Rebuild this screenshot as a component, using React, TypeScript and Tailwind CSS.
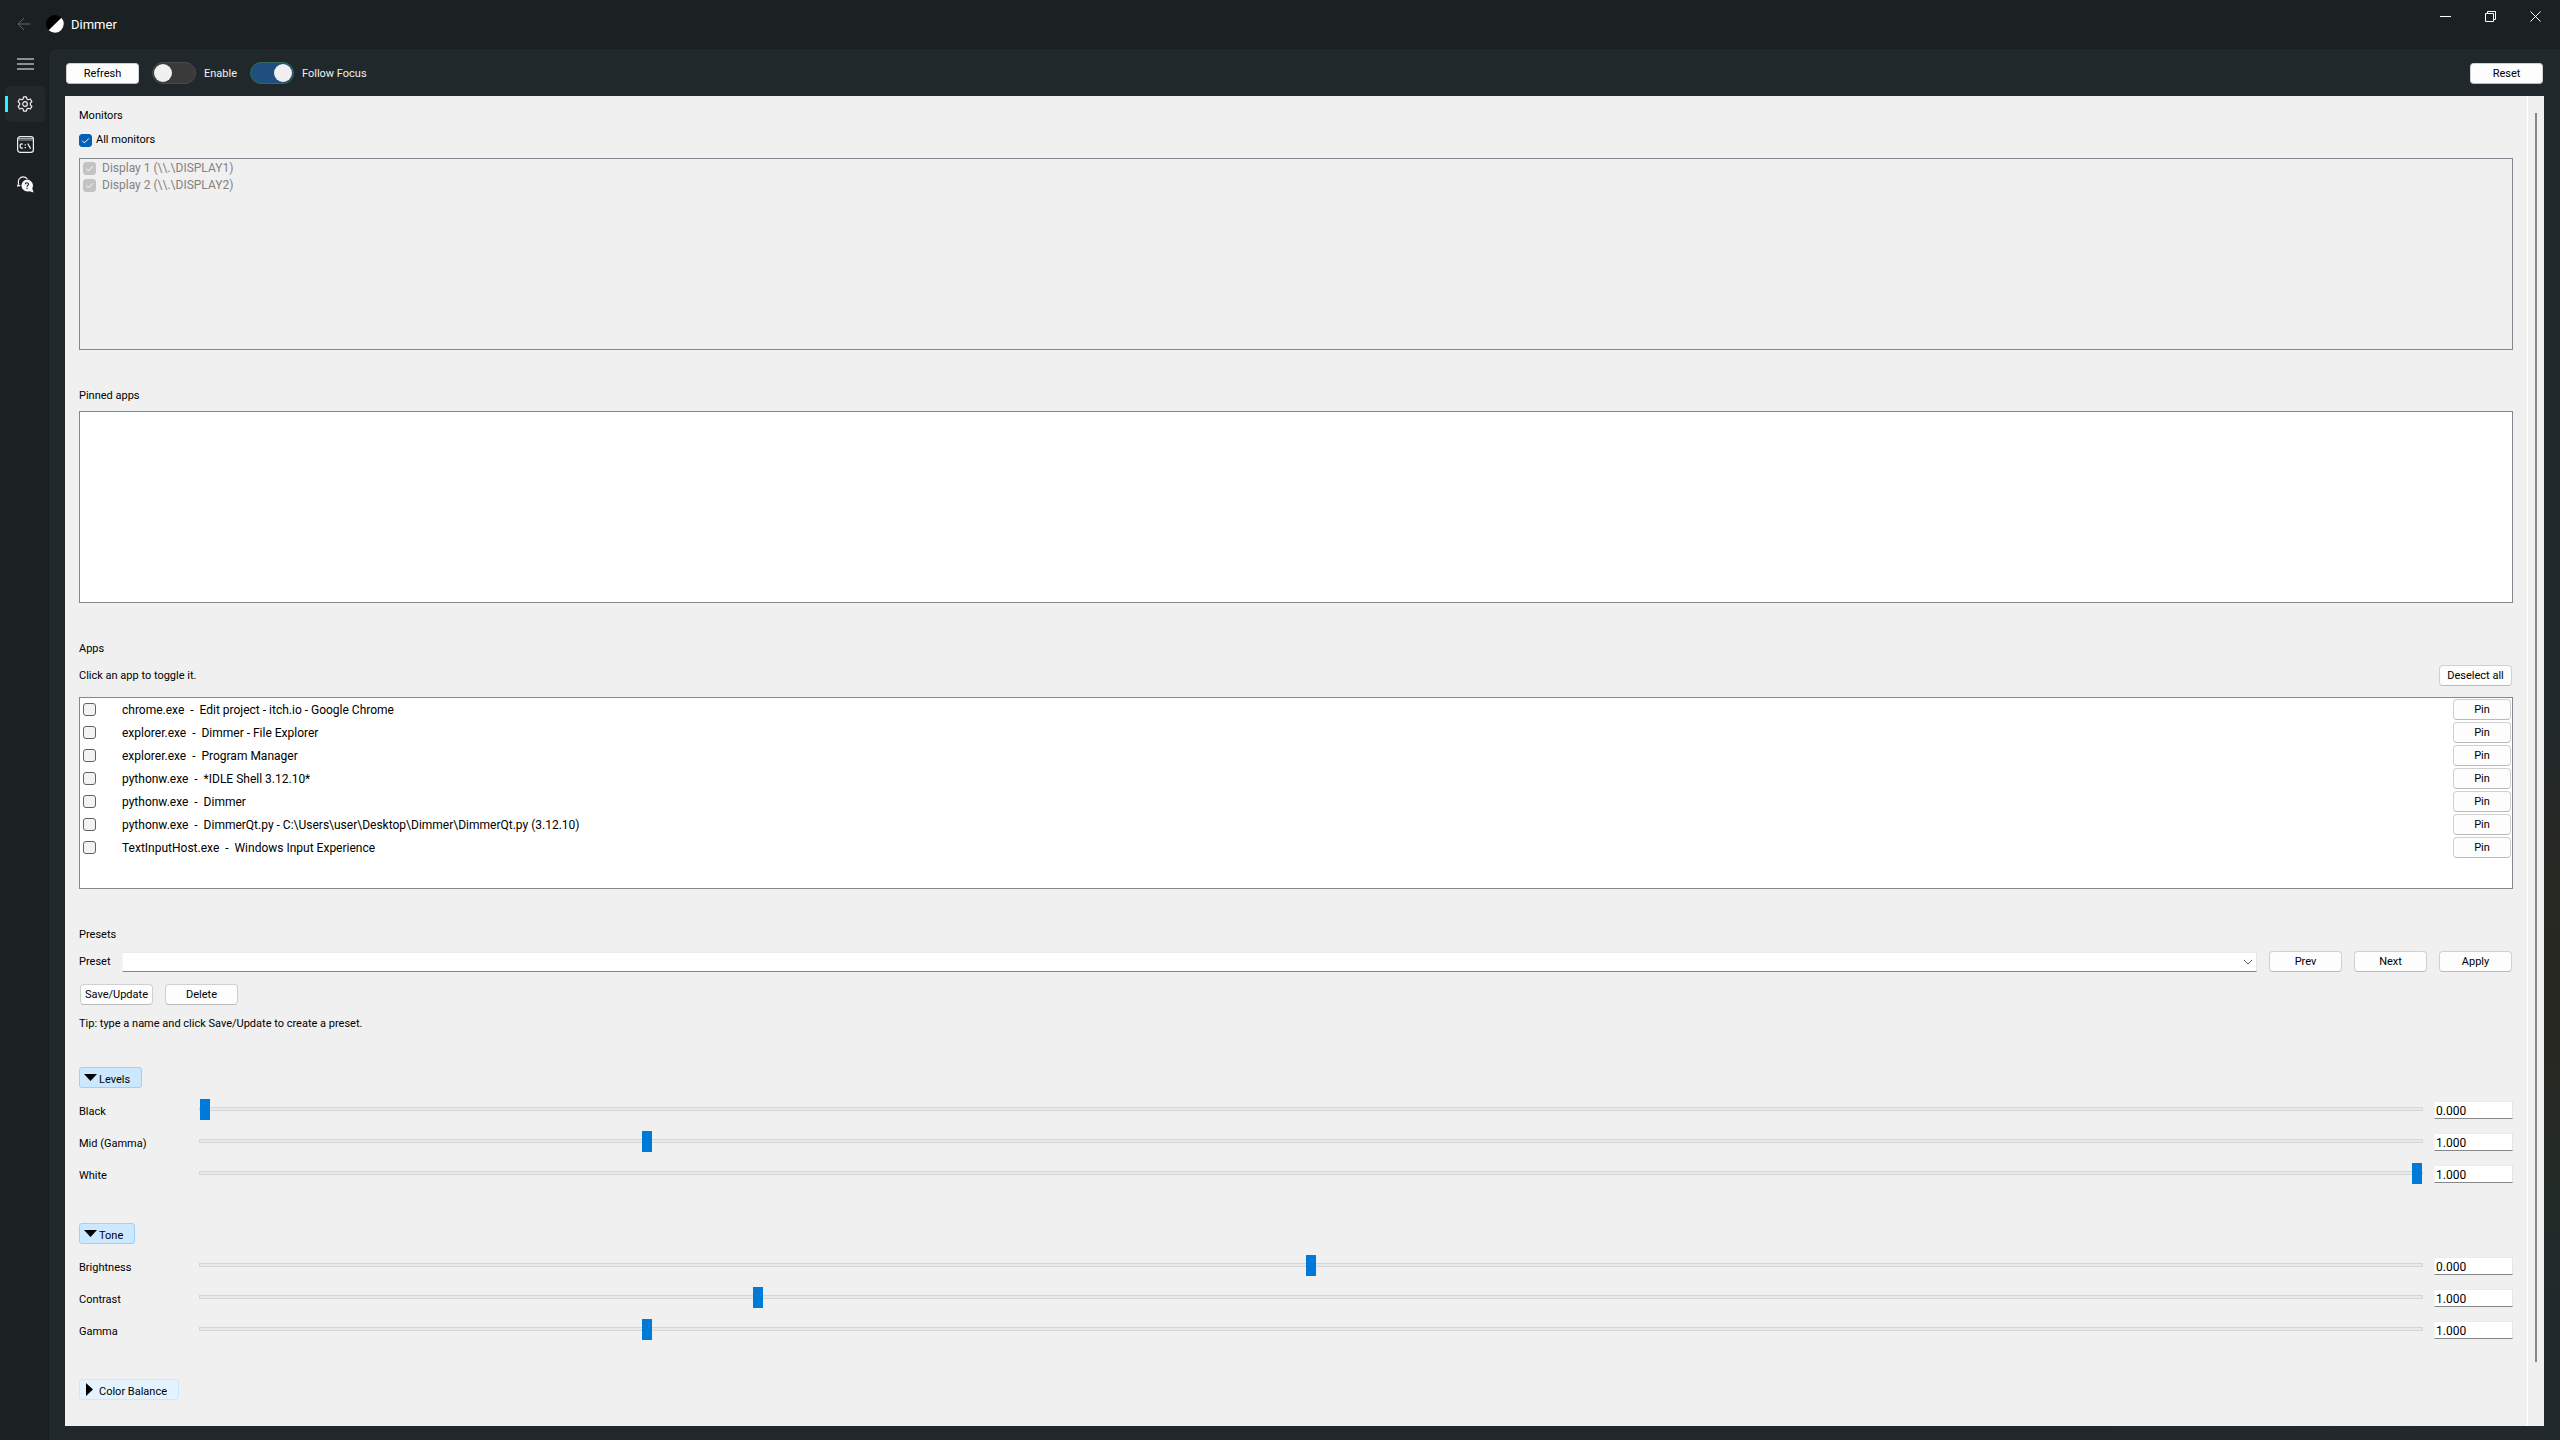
import { ReactNode, useState } from "react";

const monitors = ["Display 1 (\\\\.\\DISPLAY1)", "Display 2 (\\\\.\\DISPLAY2)"];

const apps = [
  { exe: "chrome.exe", title: "Edit project - itch.io - Google Chrome" },
  { exe: "explorer.exe", title: "Dimmer - File Explorer" },
  { exe: "explorer.exe", title: "Program Manager" },
  { exe: "pythonw.exe", title: "*IDLE Shell 3.12.10*" },
  { exe: "pythonw.exe", title: "Dimmer" },
  {
    exe: "pythonw.exe",
    title: "DimmerQt.py - C:\\Users\\user\\Desktop\\Dimmer\\DimmerQt.py (3.12.10)",
  },
  { exe: "TextInputHost.exe", title: "Windows Input Experience" },
];

const levels = [
  { label: "Black", min: 0, max: 1, value: 0 },
  { label: "Mid (Gamma)", min: 0.5, max: 3, value: 1 },
  { label: "White", min: 0, max: 1, value: 1 },
];

const tone = [
  { label: "Brightness", min: -1, max: 1, value: 0 },
  { label: "Contrast", min: 0.5, max: 2.5, value: 1 },
  { label: "Gamma", min: 0.5, max: 3, value: 1 },
];

function Button({ children, className = "w-[73px]" }: { children: ReactNode; className?: string }) {
  return (
    <button
      className={`h-[21px] shrink-0 rounded-[4px] border border-[#d0d0d0] border-b-[#bababa] bg-[#fdfdfd] pt-px text-center whitespace-nowrap text-black ${className}`}
    >
      {children}
    </button>
  );
}

function Toggle({ label, initial }: { label: string; initial: boolean }) {
  const [on, setOn] = useState(initial);
  return (
    <label className="flex items-center gap-2 text-[#f0f0f0]">
      <input type="checkbox" className="peer sr-only" checked={on} onChange={() => setOn(!on)} />
      <span className="flex h-[22px] w-11 items-center rounded-full border border-[#4a4a4a] bg-[#3a3a3a] px-px peer-checked:justify-end peer-checked:border-[#2f6b57] peer-checked:bg-[#214f7d]">
        <span className="size-[18px] rounded-full bg-[#f0f0f0]" />
      </span>
      <span className="pt-px">{label}</span>
    </label>
  );
}

function CheckBox({
  label,
  checked = false,
  disabled = false,
  className = "gap-1",
}: {
  label: ReactNode;
  checked?: boolean;
  disabled?: boolean;
  className?: string;
}) {
  const [on, setOn] = useState(checked);
  return (
    <label className={`flex items-center ${className}`}>
      <span className="grid size-[13px] shrink-0">
        <input
          type="checkbox"
          checked={on}
          disabled={disabled}
          onChange={() => setOn(!on)}
          className="col-start-1 row-start-1 size-[13px] appearance-none rounded-[3px] border border-[#626262] bg-[#f3f3f3] checked:border-[#005fb8] checked:bg-[#005fb8] disabled:border-[#c3c3c3] disabled:bg-[#c3c3c3]"
        />
        {on && (
          <svg
            viewBox="0 0 13 13"
            className="pointer-events-none col-start-1 row-start-1 size-[13px]"
            fill="none"
            stroke="#fff"
          >
            <path d="M3.2 6.7 L5.4 8.9 L9.9 4.4" />
          </svg>
        )}
      </span>
      <span className="whitespace-pre">{label}</span>
    </label>
  );
}

function SliderRow({ label, min, max, value }: { label: string; min: number; max: number; value: number }) {
  const [current, setCurrent] = useState(value);
  return (
    <div className="flex h-8 items-center">
      <label htmlFor={label} className="w-[120px] shrink-0 pt-[5px]">
        {label}
      </label>
      <input
        id={label}
        type="range"
        min={min}
        max={max}
        step={0.001}
        value={current}
        onChange={(e) => setCurrent(Number(e.target.value))}
        className="h-[21px] min-w-0 flex-1 appearance-none bg-transparent [&::-webkit-slider-runnable-track]:h-1 [&::-webkit-slider-runnable-track]:border [&::-webkit-slider-runnable-track]:border-[#d3d7d7] [&::-webkit-slider-runnable-track]:bg-[#e7eaea] [&::-webkit-slider-thumb]:-mt-[9px] [&::-webkit-slider-thumb]:h-[21px] [&::-webkit-slider-thumb]:w-[10px] [&::-webkit-slider-thumb]:appearance-none [&::-webkit-slider-thumb]:bg-[#007ad9]"
      />
      <input
        type="text"
        aria-label={`${label} value`}
        value={current.toFixed(3)}
        readOnly
        className="mt-[2px] ml-[11px] h-[18px] w-[79px] border border-t-[#ebebeb] border-r-[#e6e6e6] border-b-[#868686] border-l-[#f5f5f5] bg-white pt-px pl-px text-xs text-black"
      />
    </div>
  );
}

function SectionButton({ label, open, onClick }: { label: string; open: boolean; onClick: () => void }) {
  return (
    <button
      onClick={onClick}
      aria-expanded={open}
      className={`flex h-[21px] items-center gap-[2px] self-start rounded-[3px] border pr-[11px] pl-1 text-black ${
        open ? "border-[#99d1ff] bg-[#cce8ff]" : "border-[#cce8ff] bg-[#e5f3ff]"
      }`}
    >
      <svg viewBox="0 0 13 13" className="size-[13px]">
        {open ? <path d="M0 3 H13 L6.5 10 Z" /> : <path d="M2 0 V13 L9 6.5 Z" />}
      </svg>
      <span className="pt-1">{label}</span>
    </button>
  );
}

function SliderSection({ label, rows }: { label: string; rows: typeof levels }) {
  const [open, setOpen] = useState(true);
  return (
    <section className="mb-[34px] flex flex-col">
      <SectionButton label={label} open={open} onClick={() => setOpen(!open)} />
      {open && (
        <div className="mt-[5px]">
          {rows.map((row) => (
            <SliderRow key={row.label} {...row} />
          ))}
        </div>
      )}
    </section>
  );
}

function RailButton({ label, active = false, children }: { label: string; active?: boolean; children: ReactNode }) {
  return (
    <button
      aria-label={label}
      className={`relative flex h-9 w-10 items-center justify-center rounded-[5px] ${active ? "bg-[#23292b]" : ""}`}
    >
      {active && <span className="absolute left-0 h-4 w-[3px] bg-[#29f1ff]" />}
      {children}
    </button>
  );
}

function TitleBar() {
  return (
    <header className="flex h-[46px] items-start justify-between">
      <div className="flex h-12 items-center pl-[17px]">
        <button aria-label="Back">
          <svg viewBox="0 0 14 14" className="size-[14px]" fill="none" stroke="#62686a">
            <path d="M13.5 7 H1 M7 1 L1 7 L7 13" />
          </svg>
        </button>
        <svg viewBox="0 0 18 18" className="ml-[15px] size-[18px]">
          <circle cx="9" cy="9" r="9" fill="#000" />
          <path d="M15.36 2.64 A9 9 0 0 1 2.64 15.36 Z" fill="#fff" />
        </svg>
        <h1 className="ml-[7px] pt-px text-[13px] text-white">Dimmer</h1>
      </div>
      <div className="flex h-8 pr-[2px]">
        <button aria-label="Minimize" className="flex w-[45px] items-center justify-center">
          <svg viewBox="0 0 11 11" className="size-[11px]" stroke="#fff">
            <path d="M0 5.5 H11" />
          </svg>
        </button>
        <button aria-label="Restore" className="flex w-[45px] items-center justify-center">
          <svg viewBox="0 0 11 11" className="size-[11px]" fill="none" stroke="#fff">
            <path d="M0.5 2.5 H8.5 V10.5 H0.5 Z M2.5 2.5 V0.5 H10.5 V8.5 H8.5" />
          </svg>
        </button>
        <button aria-label="Close" className="flex w-[45px] items-center justify-center">
          <svg viewBox="0 0 11 11" className="size-[11px]" stroke="#fff">
            <path d="M0.5 0.5 L10.5 10.5 M10.5 0.5 L0.5 10.5" />
          </svg>
        </button>
      </div>
    </header>
  );
}

function Rail() {
  return (
    <nav className="flex w-12 shrink-0 flex-col gap-1 pl-[5px]">
      <RailButton label="Menu">
        <svg viewBox="0 0 17 12" className="h-3 w-[17px]" fill="#8b8f90">
          <path d="M0 0h17v2H0z M0 5h17v2H0z M0 10h17v2H0z" />
        </svg>
      </RailButton>
      <RailButton label="Settings" active>
        <svg viewBox="0 0 16 16" className="size-4" fill="none" stroke="#f0f0f0" strokeWidth="1.2" strokeLinejoin="round">
          <path d="M6.6 0.8 H9.4 L9.9 2.9 L11.2 3.7 L13.3 3 L14.9 5.5 L13.4 7.1 V8.9 L14.9 10.5 L13.3 13 L11.2 12.3 L9.9 13.1 L9.4 15.2 H6.6 L6.1 13.1 L4.8 12.3 L2.7 13 L1.1 10.5 L2.6 8.9 V7.1 L1.1 5.5 L2.7 3 L4.8 3.7 L6.1 2.9 Z" />
          <circle cx="8" cy="8" r="2.3" />
        </svg>
      </RailButton>
      <RailButton label="Console">
        <svg viewBox="0 0 17 17" className="size-[17px]" fill="none" stroke="#f0f0f0">
          <rect x="0.6" y="0.6" width="15.8" height="15.8" rx="2.6" strokeWidth="1.2" />
          <path d="M1 2.5 H16 M1 4 H16" stroke="#a9adae" />
          <path d="M5.8 8.3 C4.4 7.4 3.1 8 3.1 10 C3.1 12 4.4 12.6 5.8 11.7 M10.7 7.5 L13.6 12.6" strokeWidth="1.3" />
          <path d="M7.6 8.3h1.3v1.3H7.6z M7.6 11h1.3v1.3H7.6z" fill="#f0f0f0" stroke="none" />
        </svg>
      </RailButton>
      <RailButton label="Help">
        <svg viewBox="0 0 17 17" className="size-[17px]" fill="none">
          <path d="M3.4 9.3 L0.7 10 L1.6 7.3 C0.6 3.8 3 0.8 6.2 0.8 C8 0.8 9.3 1.6 10.2 2.8" stroke="#f0f0f0" strokeWidth="1.2" />
          <path d="M10 3.6 A6 6 0 1 0 12.6 15.2 L16.6 16.4 L15.3 12.4 A6 6 0 0 0 10 3.6 Z" fill="#f8f8f8" />
          <path d="M8.4 8.2 C8.4 6.2 11.6 6.3 11.5 8.2 C11.4 9.4 10 9.4 10 10.8" stroke="#1b2123" strokeWidth="1.2" />
          <path d="M9.4 11.8h1.2v1.2H9.4z" fill="#1b2123" />
        </svg>
      </RailButton>
    </nav>
  );
}

export default function App() {
  const [balanceOpen, setBalanceOpen] = useState(false);

  return (
    <div className="flex min-h-screen flex-col bg-[#1b2123] font-[Roboto,'Noto_Sans',sans-serif] text-[11px] leading-[14px] text-black">
      <TitleBar />
      <div className="flex flex-1">
        <Rail />
        <main className="mt-[2px] flex min-w-0 flex-1 flex-col rounded-tl-lg border-t border-l border-[#191e20] bg-[linear-gradient(to_right,#21282b_70%,transparent),linear-gradient(to_bottom,#21282b_48%,#282824_58%,#282822_72%,#232b27_82%,#21292c_90%)] px-4 pb-[14px]">
          <div className="flex h-[47px] items-center pt-px pl-px">
            <Button>Refresh</Button>
            <div className="ml-[13px] flex gap-[13px]">
              <Toggle label="Enable" initial={false} />
              <Toggle label="Follow Focus" initial />
            </div>
            <div className="mr-px ml-auto flex">
              <Button>Reset</Button>
            </div>
          </div>

          <div className="flex flex-1 bg-[#f0f0f0]">
            <div className="flex min-w-0 flex-1 flex-col border-r border-white px-[14px] pt-[13px] pb-[25px]">
              <section>
                <h2>Monitors</h2>
                <div className="mt-[10px]">
                  <CheckBox label="All monitors" checked />
                </div>
                <ul className="mt-[11px] h-48 border border-[#828790] px-[3px] pt-px text-xs leading-[17px] text-[#838383]">
                  {monitors.map((name) => (
                    <li key={name}>
                      <CheckBox label={name} checked disabled className="h-[17px] gap-[6px]" />
                    </li>
                  ))}
                </ul>
              </section>

              <section className="mt-[39px]">
                <h2>Pinned apps</h2>
                <ul className="mt-2 h-48 border border-[#828790] bg-white" />
              </section>

              <section className="mt-[39px]">
                <h2>Apps</h2>
                <div className="mt-[9px] flex items-center justify-between pr-px">
                  <p className="pt-px">Click an app to toggle it.</p>
                  <Button>Deselect all</Button>
                </div>
                <ul className="mt-[11px] h-48 border border-[#828790] bg-white pt-px pr-px pl-[3px] text-xs">
                  {apps.map((app) => (
                    <li key={app.exe + app.title} className="flex h-[23px] items-start justify-between">
                      <CheckBox label={`${app.exe}  -  ${app.title}`} className="h-[21px] gap-[26px]" />
                      <Button className="w-[58px] text-[11px]">Pin</Button>
                    </li>
                  ))}
                </ul>
              </section>

              <section className="mt-[39px]">
                <h2>Presets</h2>
                <div className="mt-[9px] flex items-center gap-3 pr-px">
                  <label htmlFor="preset" className="-mr-px shrink-0 pt-px">
                    Preset
                  </label>
                  <div className="grid min-w-0 flex-1 items-center">
                    <select
                      id="preset"
                      className="col-start-1 row-start-1 h-5 appearance-none border border-t-[#ebebeb] border-r-[#e6e6e6] border-b-[#868686] border-l-[#f5f5f5] bg-white"
                    />
                    <svg
                      viewBox="0 0 10 6"
                      className="pointer-events-none col-start-1 row-start-1 mr-1 h-[6px] w-[10px] justify-self-end"
                      fill="none"
                      stroke="#5f5f5f"
                    >
                      <path d="M1 1 L5 5 L9 1" />
                    </svg>
                  </div>
                  <Button>Prev</Button>
                  <Button>Next</Button>
                  <Button>Apply</Button>
                </div>
                <div className="mt-3 flex gap-3 pl-px">
                  <Button>Save/Update</Button>
                  <Button>Delete</Button>
                </div>
                <p className="mt-3">Tip: type a name and click Save/Update to create a preset.</p>
              </section>

              <div className="mt-9">
                <SliderSection label="Levels" rows={levels} />
                <SliderSection label="Tone" rows={tone} />
                <section className="flex flex-col">
                  <SectionButton
                    label="Color Balance"
                    open={balanceOpen}
                    onClick={() => setBalanceOpen(!balanceOpen)}
                  />
                </section>
              </div>
            </div>

            <div className="flex w-4 shrink-0 justify-center pt-[17px] pb-16">
              <div className="w-[2px] bg-[#868686]" />
            </div>
          </div>
        </main>
      </div>
    </div>
  );
}
